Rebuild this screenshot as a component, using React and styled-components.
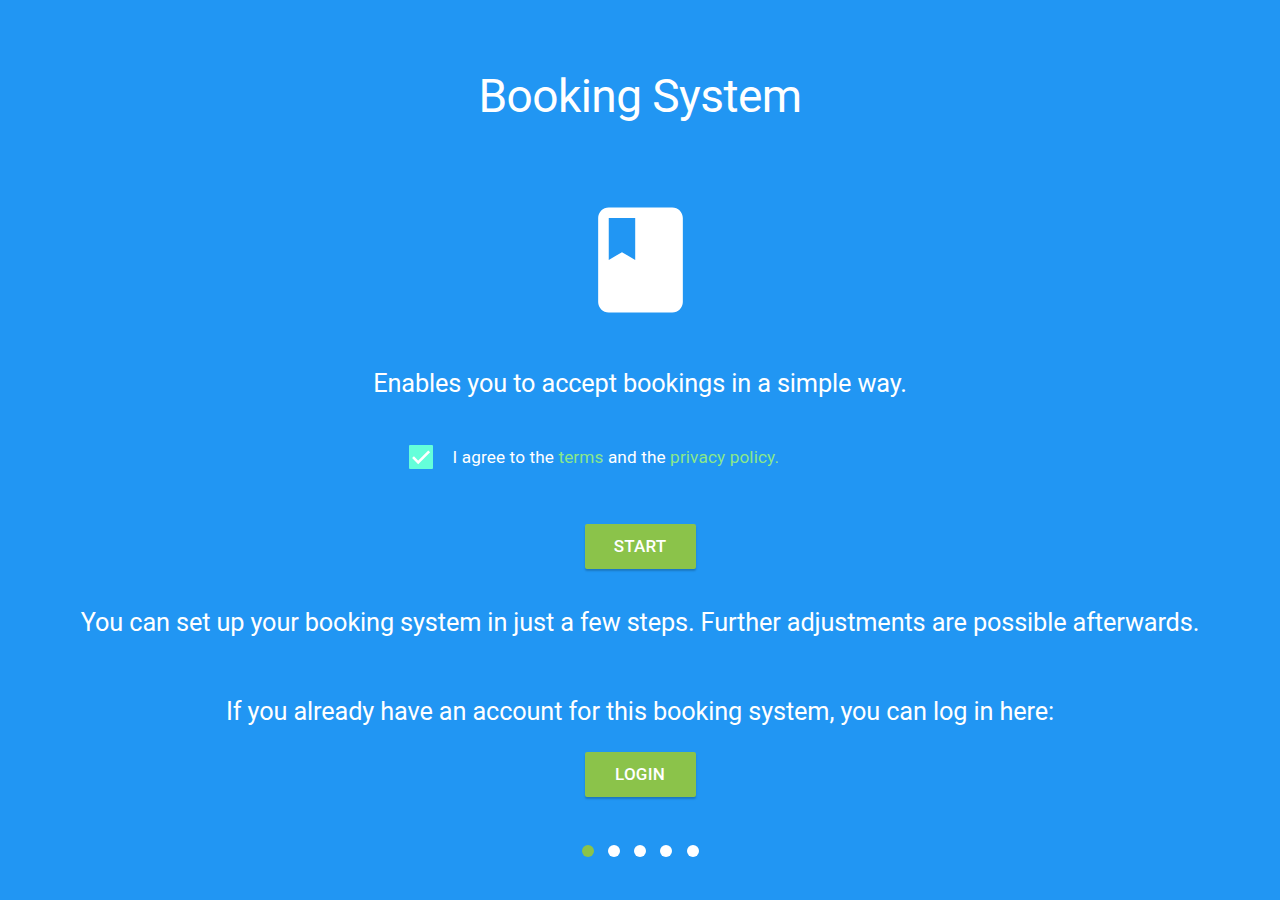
import React from 'react';
import styled, { createGlobalStyle } from 'styled-components';

const GlobalStyle = createGlobalStyle`
  body{
    margin:0;
    background-color:#2196F3;
  }
`

const Page = styled.main`
  box-sizing:border-box;
  width:1280px;
  height:900px;
  padding-top:66px;
  display:flex;
  flex-direction:column;
  align-items:center;
  overflow:hidden;
  background-color:#2196F3;
  color:#FFFFFF;
  font-family:Roboto, sans-serif;
`

const Title = styled.h1`
  margin:0;
  font-size:46px;
  font-weight:400;
  line-height:60px;
  letter-spacing:-0.55px;
`

const BookIcon = styled.svg`
  display:block;
  width:127px;
  height:126px;
  margin-top:71px;
  fill:#FFFFFF;
`

const Text = styled.p`
  margin:${props => props.$gap}px 0 0;
  font-size:25.3px;
  line-height:36px;
  letter-spacing:-0.14px;
  white-space:nowrap;
`

const Agreement = styled.label`
  display:flex;
  align-items:center;
  width:463px;
  height:24px;
  margin-top:43px;
  font-size:17.2px;
  line-height:24px;
  letter-spacing:0.12px;
`

const CheckBox = styled.svg`
  display:block;
  width:24px;
  height:24px;
  margin-right:20px;
`

const Link = styled.a`
  color:#8BE88A;
`

const Button = styled.button`
  width:111px;
  height:45px;
  margin-top:${props => props.$gap}px;
  padding:0;
  border:none;
  border-radius:2px;
  background-color:#8BC34A;
  box-shadow:0 2px 2px rgba(0,0,0,0.2);
  color:#FFFFFF;
  font-family:inherit;
  font-size:17px;
  font-weight:500;
  line-height:45px;
  letter-spacing:0.2px;
  text-transform:uppercase;
`

const Dots = styled.div`
  display:flex;
  gap:14.25px;
  margin-top:48px;
`

const Dot = styled.span`
  width:12px;
  height:12px;
  border-radius:50%;
  background-color:${props => props.$active ? '#8BC34A' : '#FFFFFF'};
`

const App = () => (
  <Page>
    <GlobalStyle />
    <Title>Booking System</Title>
    <BookIcon viewBox="0 0 24 24" preserveAspectRatio="none">
      <path d="M18 2H6c-1.1 0-2 .9-2 2v16c0 1.1.9 2 2 2h12c1.1 0 2-.9 2-2V4c0-1.1-.9-2-2-2zM6 4h5v8l-2.5-1.5L6 12V4z" />
    </BookIcon>
    <Text $gap={43}>Enables you to accept bookings in a simple way.</Text>
    <Agreement>
      <CheckBox viewBox="0 0 24 24">
        <rect width="24" height="24" rx="1" fill="#64FFDA" />
        <path d="M4 12.2l5.2 5.2L20.2 6.4" fill="none" stroke="#FFFFFF" strokeWidth="2.6" />
      </CheckBox>
      <span>I agree to the <Link>terms</Link> and the <Link>privacy policy.</Link></span>
    </Agreement>
    <Button $gap={55}>Start</Button>
    <Text $gap={36}>You can set up your booking system in just a few steps. Further adjustments are possible afterwards.</Text>
    <Text $gap={53}>If you already have an account for this booking system, you can log in here:</Text>
    <Button $gap={22}>Login</Button>
    <Dots>
      {[0, 1, 2, 3, 4].map(step => <Dot key={step} $active={step === 0} />)}
    </Dots>
  </Page>
)

export default App;
